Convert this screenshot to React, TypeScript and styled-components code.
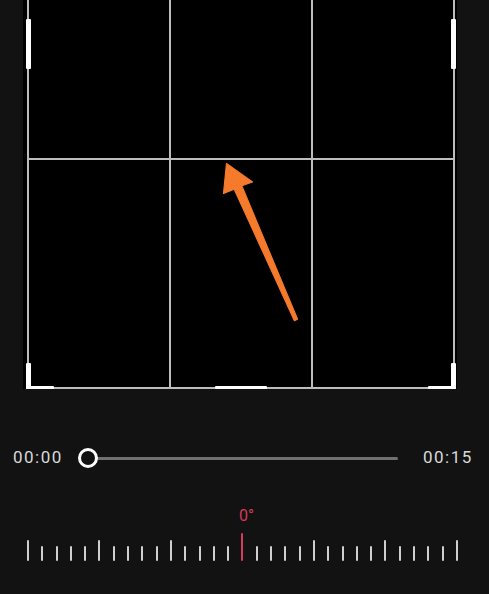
import React from 'react';
import styled, { createGlobalStyle } from 'styled-components';

const GlobalStyle = createGlobalStyle`
  html, body {
    margin: 0;
    padding: 0;
    background: #121212;
    overflow: hidden;
  }
  body {
    font-family: Roboto, "Liberation Sans", Arial, sans-serif;
  }
`;

const Page = styled.div`
  width: 489px;
  height: 594px;
  display: flex;
  flex-direction: column;
  overflow: hidden;
`;

// crop frame (scrolled, top is above the viewport)
const CropArea = styled.div`
  position: relative;
  margin-top: -71px;
  margin-left: 23px;
  width: 434px;
  height: 460px;
  background: #000;
`;

const GridBox = styled.div`
  margin-left: 4px;
  width: 424px;
  height: 456px;
  border: 2px solid #bdbdbd;
  display: grid;
  grid-template-columns: repeat(3, 1fr);
  grid-template-rows: repeat(2, 1fr);
  gap: 2px;
  background: #bdbdbd;
`;

const Cell = styled.div`
  background: #000;
`;

const Handle = styled.div<{ $x: number; $y: number; $w: number; $h: number }>`
  position: absolute;
  left: ${(p) => p.$x}px;
  top: ${(p) => p.$y}px;
  width: ${(p) => p.$w}px;
  height: ${(p) => p.$h}px;
  background: #fff;
  border-radius: 1px;
`;

const ArrowLayer = styled.svg`
  position: absolute;
  left: 0;
  top: 0;
  width: 434px;
  height: 460px;
  pointer-events: none;
`;

// timeline
const SliderRow = styled.div`
  margin-top: 56px;
  height: 26px;
  padding-left: 13px;
  display: flex;
  align-items: center;
`;

const TimeLabel = styled.span<{ $width?: number }>`
  width: ${(p) => (p.$width ? `${p.$width}px` : 'auto')};
  font-size: 17px;
  line-height: 24px;
  letter-spacing: 1.5px;
  color: #d9d9d9;
  margin-bottom: 3px;
  white-space: nowrap;
`;

const Slider = styled.div`
  margin-left: 15px;
  width: 320px;
  display: flex;
  align-items: center;
`;

const Knob = styled.div`
  position: relative;
  z-index: 1;
  box-sizing: border-box;
  width: 20px;
  height: 20px;
  border-radius: 50%;
  border: 3px solid #fff;
  background: #121212;
`;

const Track = styled.div`
  flex: 1;
  height: 3px;
  margin-left: -10px;
  background: #707070;
  border-radius: 2px;
`;

const EndTime = styled(TimeLabel)`
  margin-left: 25px;
`;

// rotation ruler
const Ruler = styled.div`
  margin-top: 36px;
  margin-left: 27px;
  width: 431px;
  display: flex;
  flex-direction: column;
  gap: 8px;
`;

const Angle = styled.div`
  display: flex;
  justify-content: center;
  padding-left: 8px;
  font-size: 16px;
  line-height: 18px;
  color: #d8395a;
`;

const Ticks = styled.div`
  height: 28px;
  display: flex;
  justify-content: space-between;
  align-items: flex-end;
`;

const Tick = styled.div<{ $kind: 'short' | 'long' | 'center' }>`
  width: 2px;
  border-radius: 1px;
  height: ${(p) => (p.$kind === 'center' ? 28 : p.$kind === 'long' ? 21 : 15)}px;
  background: ${(p) => (p.$kind === 'center' ? '#d8395a' : '#cfcfcf')};
`;

export default function App() {
  const ticks = Array.from({ length: 31 }, (_, i) =>
    i === 15 ? 'center' : i % 5 === 0 ? 'long' : 'short'
  ) as Array<'short' | 'long' | 'center'>;

  return (
    <>
      <GlobalStyle />
      <Page>
        <CropArea>
          <GridBox>
            {Array.from({ length: 6 }, (_, i) => (
              <Cell key={i} />
            ))}
          </GridBox>

          <Handle $x={3} $y={90} $w={5} $h={50} />
          <Handle $x={428} $y={90} $w={5} $h={50} />
          <Handle $x={3} $y={434} $w={5} $h={26} />
          <Handle $x={3} $y={457} $w={28} $h={3} />
          <Handle $x={428} $y={434} $w={5} $h={26} />
          <Handle $x={405} $y={457} $w={28} $h={3} />
          <Handle $x={192} $y={457} $w={52} $h={3} />

          <ArrowLayer viewBox="23 -71 434 460">
            <polygon
              points="226.5,163.5 252.5,182 241.8,185.8 297.6,319.3 294.4,320.7 234.2,189.2 223.5,193.5"
              fill="#f57a2b"
              stroke="#f57a2b"
              strokeWidth="1.2"
              strokeLinejoin="round"
            />
          </ArrowLayer>
        </CropArea>

        <SliderRow>
          <TimeLabel $width={50}>00:00</TimeLabel>
          <Slider>
            <Knob />
            <Track />
          </Slider>
          <EndTime>00:15</EndTime>
        </SliderRow>

        <Ruler>
          <Angle>0°</Angle>
          <Ticks>
            {ticks.map((k, i) => (
              <Tick key={i} $kind={k} />
            ))}
          </Ticks>
        </Ruler>
      </Page>
    </>
  );
}
